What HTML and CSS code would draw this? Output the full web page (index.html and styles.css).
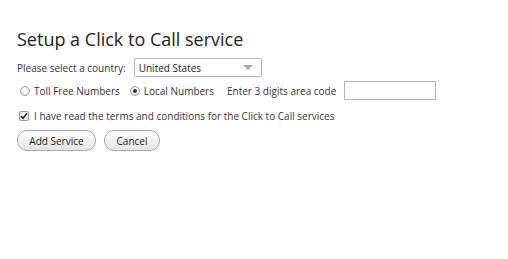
FILE: index.html
```html
<!DOCTYPE html>
<html>
<head>
<meta charset="utf-8">
<link rel="stylesheet" href="styles.css">
</head>
<body>
<div class="page">
  <h1 class="title">Setup a Click to Call service</h1>
  <div class="row row-country">
    <label class="lbl">Please select a country:</label>
    <div class="select">
      <span class="select-text">United States</span>
      <span class="select-arrow"></span>
    </div>
  </div>
  <div class="row row-type">
    <span class="radio"></span><span class="lbl">Toll Free Numbers</span>
    <span class="radio checked"></span><span class="lbl">Local Numbers</span>
    <span class="lbl area-lbl">Enter 3 digits area code</span>
    <span class="text-input"></span>
  </div>
  <div class="row row-terms">
    <span class="checkbox"><svg width="8" height="8" viewBox="0 0 8 8"><path d="M1 4.2 L3 6.3 L7 1.2" fill="none" stroke="#222" stroke-width="1.6"/></svg></span>
    <span class="lbl">I have read the terms and conditions for the Click to Call services</span>
  </div>
  <div class="row row-buttons">
    <button class="btn btn-add">Add Service</button>
    <button class="btn btn-cancel">Cancel</button>
  </div>
</div>
</body>
</html>
```
FILE: styles.css
```css
html, body { margin: 0; padding: 0; background: #fff; }
body { font-family: "Open Sans", "Liberation Sans", sans-serif; color: #333; }
.page { padding: 26px 0 0 17px; }
.title {
  margin: 0;
  font-size: 18px;
  font-weight: normal;
  line-height: 26px;
  color: #222;
}
.row { display: flex; align-items: center; font-size: 10px; }
.lbl { font-size: 10px; color: #333; white-space: nowrap; }
.row-country { margin-top: 6px; height: 19px; }
.select {
  margin-left: 8px;
  height: 17px;
  border: 1px solid #b9b9b9;
  border-radius: 2px;
  display: flex;
  align-items: center;
  justify-content: space-between;
  padding: 0 0 0 4px;
  box-sizing: content-box;
  width: 122px;
}
.select-text { font-size: 10px; color: #222; }
.select-arrow {
  width: 0; height: 0;
  border-left: 5px solid transparent;
  border-right: 5px solid transparent;
  border-top: 5px solid #aaa;
  margin-right: 8px;
}
.row-type { margin-top: 3px; height: 21px; }
.radio {
  border-radius: 50%;
  border: 1px solid #a0a0a0;
  background: radial-gradient(circle at 50% 35%, #fff, #ddd);
  margin: 0 4px 0 3px;
  display: inline-flex;
  align-items: center;
  justify-content: center;
  box-sizing: border-box;
  width: 10px; height: 10px;
}
.radio.checked::after {
  content: "";
  width: 4px; height: 4px;
  border-radius: 50%;
  background: #333;
}
.radio.checked { margin-left: 10px; }
.area-lbl { margin-left: 13px; }
.text-input {
  margin-left: 8px;
  width: 92px; height: 19px;
  border: 1px solid #b5b5b5;
  box-sizing: border-box;
  background: #fff;
}
.row-terms { margin-top: 7px; height: 16px; }
.checkbox {
  width: 10px; height: 10px;
  border: 1px solid #999;
  box-sizing: border-box;
  border-radius: 2px;
  margin: 0 5px 0 2px;
  display: inline-flex; align-items: center; justify-content: center;
  background: #f4f4f4;
}
.row-buttons { margin-top: 6px; gap: 8px; }
.btn {
  font-family: inherit;
  font-size: 10px;
  color: #222;
  height: 21px;
  padding: 0;
  white-space: nowrap;
  border: 1px solid #a8a8a8;
  border-radius: 10px;
  background: linear-gradient(#ffffff, #e4e4e4);
  margin: 0;
}
.btn-add { width: 79px; }
.btn-cancel { width: 56px; }
```
